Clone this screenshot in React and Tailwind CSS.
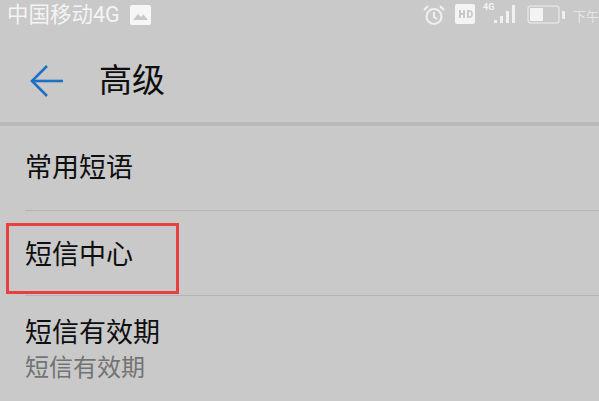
import React from 'react'

const font = { fontFamily: '"Roboto", "Noto Sans CJK SC", sans-serif' }

const StatusBar = () => (
  <div className="h-[44px] flex items-start justify-between text-[#f4f4f4] overflow-hidden">
    <div className="flex items-center pl-[7px] pt-[3px]">
      <span className="text-[21.5px] leading-[24px]">中国移动4G</span>
      <svg className="ml-[10px] mt-[1px]" width="21" height="21" viewBox="0 0 21 21">
        <rect x="0" y="0" width="21" height="20" rx="2" fill="#f6f6f6" />
        <path d="M3 15 L8 9 L11 12 L13.5 9.5 L18 15 Z" fill="#c9c9c9" />
      </svg>
    </div>
    <div className="flex items-start pt-[3px]">
      <svg className="mt-[1px]" width="24" height="22" viewBox="0 0 24 22" fill="none" stroke="#f0f0f0" strokeWidth="2">
        <circle cx="12" cy="12.5" r="7.5" />
        <path d="M12 8 V13 L15 15" />
        <path d="M2 6 L6 2 M22 6 L18 2" />
      </svg>
      <svg className="ml-[9px] mt-[1px]" width="21" height="20" viewBox="0 0 21 20">
        <rect x="0" y="0" width="20" height="20" rx="2" fill="#f4f4f4" />
        <rect x="4" y="6" width="2" height="8" fill="#c9c9c9" />
        <rect x="8" y="6" width="2" height="8" fill="#c9c9c9" />
        <rect x="4" y="9" width="6" height="2" fill="#c9c9c9" />
        <rect x="12" y="6" width="2" height="8" fill="#c9c9c9" />
        <path d="M13 7 H15 Q17 7 17 10 Q17 13 15 13 H13" fill="none" stroke="#c9c9c9" strokeWidth="1.6" />
      </svg>
      <div className="relative ml-[7px] w-[33px] h-[22px]">
        <span className="absolute left-0 top-[-1px] text-[9px] leading-[10px] font-bold">4G</span>
        <svg className="absolute left-0 top-0" width="33" height="22" viewBox="0 0 33 22" fill="#f0f0f0">
          <rect x="11" y="17" width="3" height="3" />
          <rect x="17" y="13" width="3" height="7" />
          <rect x="23" y="8" width="3" height="12" />
          <rect x="29" y="2" width="3" height="18" />
        </svg>
      </div>
      <svg className="ml-[11px] mt-[2px]" width="38" height="20" viewBox="0 0 38 20">
        <rect x="1" y="1" width="31" height="17" rx="3" fill="none" stroke="#e2e2e2" strokeWidth="1.5" />
        <rect x="3" y="3" width="13" height="13" rx="1" fill="#f4f4f4" />
        <rect x="35" y="6" width="3" height="8" rx="1" fill="#f0f0f0" />
      </svg>
      <span className="ml-[8px] mt-[4px] text-[13px] leading-[20px] text-[#e6e6e6] whitespace-nowrap">下午</span>
    </div>
  </div>
)

const Row = ({ title, sub, height, pt }) => (
  <div className={`ml-[25px] ${height} ${pt} box-border`}>
    <div className="text-[27px] leading-[32px] text-[#0e0e0e]">{title}</div>
    {sub && <div className="text-[24px] leading-[38px] text-[#737373]">{sub}</div>}
  </div>
)

export default function App() {
  return (
    <div className="relative w-[599px] h-[401px] bg-[#c9c9c9] overflow-hidden" style={font}>
      <StatusBar />

      {/* title bar */}
      <div className="h-[78px] flex items-center pl-[29px] pb-[4px]">
        <svg width="36" height="36" viewBox="0 0 36 36" fill="none" stroke="#1f6fc4" strokeWidth="2.6">
          <path d="M34 18 H3" />
          <path d="M18 3 L3 18 L18 33" />
        </svg>
        <span className="ml-[34px] text-[33px] leading-[40px] text-[#0e0e0e]">高级</span>
      </div>
      <div className="h-[4px] bg-[#b9b9b9]" />

      <Row title="常用短语" height="h-[84px]" pt="pt-[26px]" />
      <div className="ml-[25px] h-px bg-[#b4b4b4]" />
      <Row title="短信中心" height="h-[84px]" pt="pt-[28px]" />
      <div className="ml-[25px] h-px bg-[#b4b4b4]" />
      <Row title="短信有效期" sub="短信有效期" height="h-[105px]" pt="pt-[21px]" />

      {/* red highlight box */}
      <div className="absolute left-[6px] top-[223px] w-[173px] h-[71px] border-[3px] border-[#e8403f]" />
    </div>
  )
}
